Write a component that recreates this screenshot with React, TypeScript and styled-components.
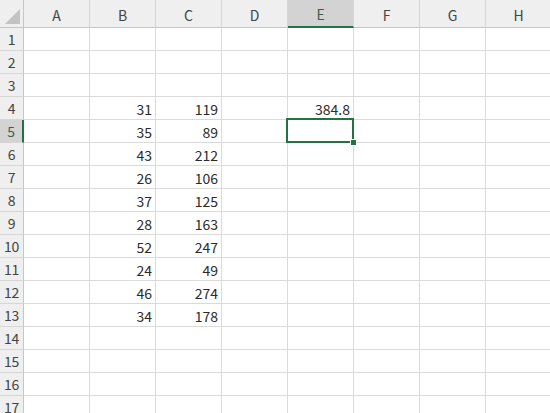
import React from 'react';
import styled, { createGlobalStyle, css } from 'styled-components';

const GlobalStyle = createGlobalStyle`
  html, body {
    margin: 0;
    padding: 0;
    background: #ffffff;
    overflow: hidden;
  }
  body {
    font-family: "Noto Sans CJK JP", "Liberation Sans", sans-serif;
  }
`;

const COLS = ['A', 'B', 'C', 'D', 'E', 'F', 'G', 'H'];
const ROW_COUNT = 17;

// B列, C列の値 (4行目から13行目)
const colB = [31, 35, 43, 26, 37, 28, 52, 24, 46, 34];
const colC = [119, 89, 212, 106, 125, 163, 247, 49, 274, 178];

const ACTIVE_COL = 'E';
const ACTIVE_ROW = 5;

const getValue = (col: string, row: number): string => {
  const i = row - 4;
  if (col === 'B' && i >= 0 && i < colB.length) return String(colB[i]);
  if (col === 'C' && i >= 0 && i < colC.length) return String(colC[i]);
  if (col === 'E' && row === 4) return '384.8';
  return '';
};

const Sheet = styled.div`
  display: grid;
  grid-template-columns: 24px repeat(8, 66px);
  grid-template-rows: 28px repeat(${ROW_COUNT}, 23px);
  width: 550px;
  height: 413px;
  overflow: hidden;
`;

const Corner = styled.div`
  position: relative;
  background: #efefef;
  border-right: 1px solid #c6c6c6;
  border-bottom: 1px solid #c6c6c6;
  &::after {
    content: '';
    position: absolute;
    right: 3px;
    bottom: 3px;
    width: 0;
    height: 0;
    border-left: 15px solid transparent;
    border-bottom: 15px solid #c2c2c2;
  }
`;

const ColHeader = styled.div<{ $active?: boolean }>`
  display: flex;
  align-items: center;
  justify-content: center;
  padding-top: 2px;
  box-sizing: border-box;
  background: #efefef;
  border-right: 1px solid #d6d6d6;
  border-bottom: 1px solid #c6c6c6;
  color: #444444;
  font-size: 14px;
  ${(p) =>
    p.$active &&
    css`
      background: #d3d3d3;
      color: #3d5f4c;
      border-bottom: 2px solid #217346;
    `}
`;

const RowHeader = styled.div<{ $active?: boolean }>`
  display: flex;
  align-items: center;
  justify-content: center;
  box-sizing: border-box;
  background: #efefef;
  border-right: 1px solid #c6c6c6;
  border-bottom: 1px solid #d6d6d6;
  color: #444444;
  font-size: 14px;
  letter-spacing: -0.3px;
  ${(p) =>
    p.$active &&
    css`
      background: #d3d3d3;
      color: #3d5f4c;
      border-right: 2px solid #217346;
    `}
`;

const Cell = styled.div<{ $active?: boolean }>`
  position: relative;
  display: flex;
  align-items: center;
  justify-content: flex-end;
  padding: 1px 3px 0 0;
  box-sizing: border-box;
  border-right: 1px solid #dadada;
  border-bottom: 1px solid #dadada;
  color: #2b2b2b;
  font-size: 14px;
  ${(p) =>
    p.$active &&
    css`
      &::before {
        content: '';
        position: absolute;
        left: -2px;
        top: -2px;
        right: -1px;
        bottom: -1px;
        border: 2px solid #217346;
        z-index: 1;
      }
    `}
`;

const FillHandle = styled.span`
  position: absolute;
  right: -4px;
  bottom: -4px;
  width: 5px;
  height: 5px;
  background: #217346;
  border: 1px solid #ffffff;
  z-index: 2;
`;

const App = () => {
  const rows = Array.from({ length: ROW_COUNT }, (_, i) => i + 1);

  return (
    <>
      <GlobalStyle />
      <Sheet>
        <Corner />
        {COLS.map((c) => (
          <ColHeader key={c} $active={c === ACTIVE_COL}>
            {c}
          </ColHeader>
        ))}
        {rows.map((r) => (
          <React.Fragment key={r}>
            <RowHeader $active={r === ACTIVE_ROW}>{r}</RowHeader>
            {COLS.map((c) => {
              const active = c === ACTIVE_COL && r === ACTIVE_ROW;
              return (
                <Cell key={c + r} $active={active}>
                  {getValue(c, r)}
                  {active ? <FillHandle /> : null}
                </Cell>
              );
            })}
          </React.Fragment>
        ))}
      </Sheet>
    </>
  );
};

export default App;
